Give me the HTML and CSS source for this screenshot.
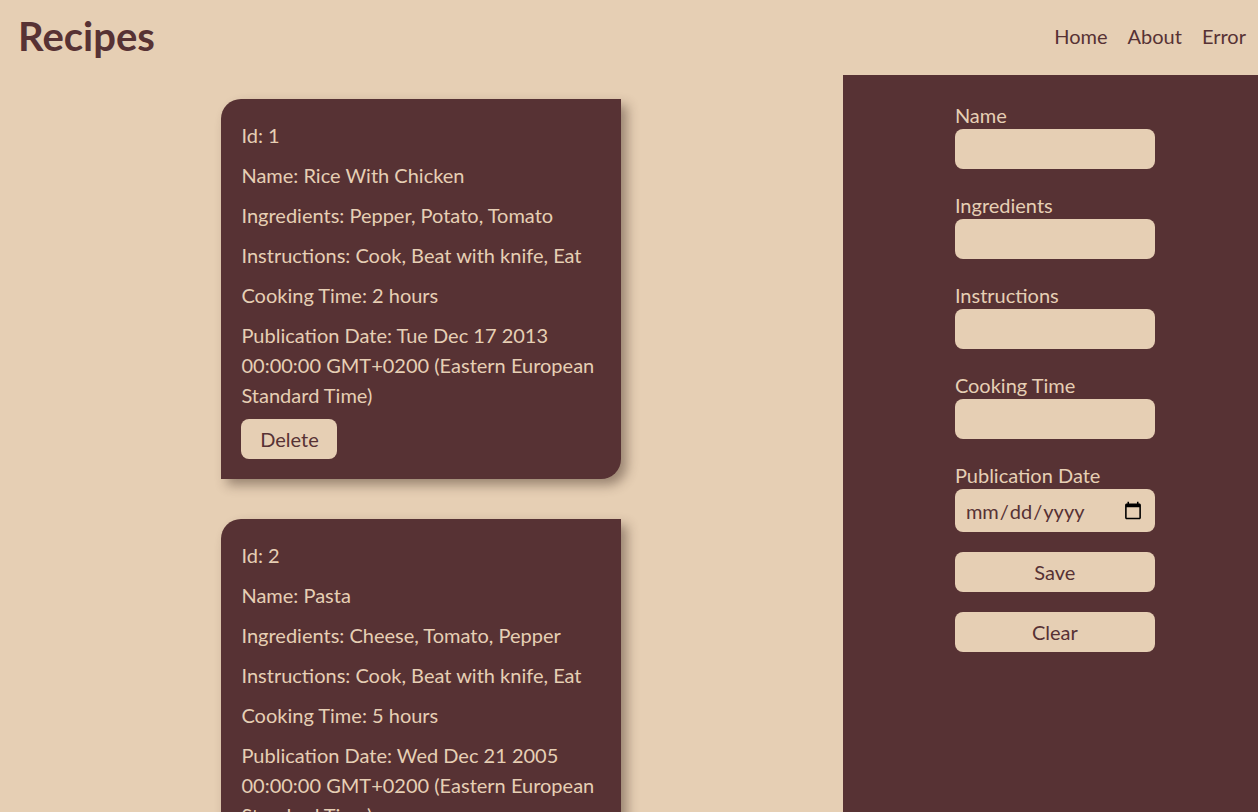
FILE: index.html
```html
<!DOCTYPE html>
<html lang="en">
<head>
<meta charset="utf-8">
<title>Recipes</title>
<link rel="stylesheet" href="styles.css">
</head>
<body>
<header class="header">
  <h1 class="logo">Recipes</h1>
  <nav class="nav">
    <a class="nav-link" href="#">Home</a>
    <a class="nav-link" href="#">About</a>
    <a class="nav-link" href="#">Error</a>
  </nav>
</header>
<main class="main">
  <section class="list">
    <article class="card">
      <p class="field">Id: 1</p>
      <p class="field">Name: Rice With Chicken</p>
      <p class="field">Ingredients: Pepper, Potato, Tomato</p>
      <p class="field">Instructions: Cook, Beat with knife, Eat</p>
      <p class="field">Cooking Time: 2 hours</p>
      <p class="field">Publication Date: Tue Dec 17 2013 00:00:00 GMT+0200 (Eastern European Standard Time)</p>
      <button class="btn btn-delete">Delete</button>
    </article>
    <article class="card">
      <p class="field">Id: 2</p>
      <p class="field">Name: Pasta</p>
      <p class="field">Ingredients: Cheese, Tomato, Pepper</p>
      <p class="field">Instructions: Cook, Beat with knife, Eat</p>
      <p class="field">Cooking Time: 5 hours</p>
      <p class="field">Publication Date: Wed Dec 21 2005 00:00:00 GMT+0200 (Eastern European Standard Time)</p>
      <button class="btn btn-delete">Delete</button>
    </article>
  </section>
  <aside class="panel">
    <form class="form">
      <label class="label" for="name">Name</label>
      <input class="input" id="name" type="text">
      <label class="label" for="ing">Ingredients</label>
      <input class="input" id="ing" type="text">
      <label class="label" for="ins">Instructions</label>
      <input class="input" id="ins" type="text">
      <label class="label" for="time">Cooking Time</label>
      <input class="input" id="time" type="text">
      <label class="label" for="date">Publication Date</label>
      <input class="input input-date" id="date" type="date">
      <button class="btn btn-form" type="button">Save</button>
      <button class="btn btn-form" type="button">Clear</button>
    </form>
  </aside>
</main>
</body>
</html>
```

FILE: styles.css
```css
* { box-sizing: border-box; }

html, body {
  margin: 0;
  padding: 0;
}

body {
  background: #e6cfb4;
  color: #573234;
  font-family: "Lato", "Open Sans", sans-serif;
  font-size: 20px;
  min-height: 100vh;
  display: flex;
  flex-direction: column;
}

.header {
  height: 75px;
  display: flex;
  align-items: center;
  justify-content: space-between;
  padding: 0 12px 4px 18px;
}

.logo {
  margin: 0;
  font-size: 40px;
  font-weight: 700;
  color: #573234;
}

.nav {
  display: flex;
  gap: 20px;
}

.nav-link {
  color: #573234;
  text-decoration: none;
  font-size: 20px;
}

.main {
  flex: 1;
  display: flex;
}

.list {
  flex: 1;
  display: flex;
  flex-direction: column;
  align-items: center;
  gap: 40px;
  padding-top: 24px;
}

.card {
  width: 400px;
  background: #573234;
  color: #e6cfb4;
  border-radius: 20px 0 20px 0;
  padding: 21px 20px 20px;
  box-shadow: 6px 6px 12px rgba(60, 40, 30, 0.45);
}

.field {
  margin: 0 0 10px;
  line-height: 30px;
}

.btn {
  font-family: inherit;
  font-size: 20px;
  color: #573234;
  background: #e6cfb4;
  border: none;
  border-radius: 8px;
  cursor: pointer;
}

.btn-delete {
  height: 40px;
  width: 96px;
  margin-top: -1px;
}

.panel {
  width: 33%;
  background: #573234;
  padding: 26px 0 0 112px;
}

.form {
  width: 200px;
  display: flex;
  flex-direction: column;
}

.label {
  color: #e6cfb4;
  line-height: 28px;
}

.input {
  height: 40px;
  border: none;
  border-radius: 8px;
  background: #e6cfb4;
  color: #573234;
  font-family: inherit;
  font-size: 20px;
  margin-bottom: 22px;
  padding: 0 10px;
}

.input-date {
  height: 43px;
  margin-bottom: 20px;
}

.btn-form {
  height: 40px;
  width: 200px;
  margin-bottom: 20px;
}
```
